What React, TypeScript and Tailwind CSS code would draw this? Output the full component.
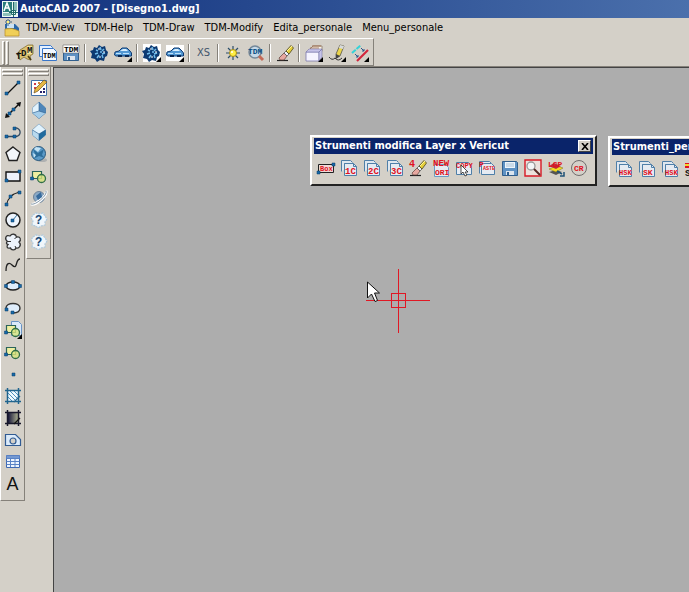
import type { ReactNode } from "react";
import { clsx } from "clsx";

type Tool = { label: string; icon: ReactNode };

const MENUS = ["TDM-View", "TDM-Help", "TDM-Draw", "TDM-Modify", "Edita_personale", "Menu_personale"];

function Svg({ children }: { children: ReactNode }) {
  return (
    <svg viewBox="0 0 18 18" className="size-[18px] shrink-0 overflow-visible" aria-hidden="true">
      {children}
    </svg>
  );
}

function Word({ x, y, size = 7, fill = "#e01020", children }: { x: number; y: number; size?: number; fill?: string; children: string }) {
  return (
    <text x={x} y={y} fontSize={size} fill={fill} fontWeight="bold" fontFamily="'Liberation Mono', monospace">
      {children}
    </text>
  );
}

const Node = ({ x, y }: { x: number; y: number }) => (
  <path d={`M${x} ${y}h3v3h-3z`} fill="#1769a8" stroke="#0b3c6b" strokeWidth=".5" />
);

const Flyout = () => <path d="M18 13v5h-5z" fill="#000" />;

function Pages({ text, x = 5, size = 9 }: { text: string; x?: number; size?: number }) {
  return (
    <Svg>
      <path d="M1.5 12.500V1.500h9l2 2M4.500 14V4.500h9" fill="#dfe7ef" stroke="#4f7fa8" />
      <path d="M4.500 4.500h9l3 3v9h-12z" fill="#e6ebf2" stroke="#4f7fa8" />
      <path d="M13.500 4.500v3h3" fill="none" stroke="#4f7fa8" />
      <Word x={x} y={15} size={size}>{text}</Word>
    </Svg>
  );
}

function Pencil() {
  return (
    <>
      <path d="M1 16.500h11" stroke="#222" strokeWidth="1.200" />
      <path d="M3 14l5-5 3 3-3 4H4z" fill="#e7a8a0" stroke="#5a3d38" strokeWidth=".7" />
      <path d="M8 9l2-2 3 3-2 2z" fill="#eef1f6" stroke="#444" strokeWidth=".7" />
      <path d="M10 7l5-5.500L17.500 4 13 10z" fill="#e5cf3a" stroke="#4a4420" strokeWidth=".8" />
      <path d="M11 7l5-5" stroke="#fff59a" />
    </>
  );
}

function Wheel({ lit }: { lit?: boolean }) {
  return (
    <Svg>
      {lit && <path d="M0 0h18v18H0z" fill="#fff" />}
      <path d="M3 3l3 1 2-3 3 2 3-1 1 4 2 2-1 4-2 1-1 4-4-1-3 2-2-3-4-1 1-4-2-3 3-1z" fill="#0d3a72" />
      <path d="M5 6l2 1M9 3l1 3M13 5l-2 2M4 10l3-1M14 9l-3 1M6 14l2-3M12 14l-1-3M9 8h2" stroke="#71bcec" strokeWidth="1.500" />
      <path d="M7 5h2M12 8h2M8 13h2" stroke="#fff" />
      {lit && <Flyout />}
    </Svg>
  );
}

function Car({ lit }: { lit?: boolean }) {
  return (
    <Svg>
      {lit && <path d="M0 1h18v16H0z" fill="#fff" />}
      <path d="M1 8l4-1 3-3h5l3 3 1.500 2v3H2L.5 11z" fill="#5298d4" stroke="#0d3a72" />
      <path d="M6 7l3-2h3l2 2z" fill="#d9efff" />
      <path d="M2 9.500h5M9 9.500h6" stroke="#bde2fb" />
      <path d="M4 11h4v2H4zM11 11h4v2h-4z" fill="#082650" />
      <Flyout />
    </Svg>
  );
}

function Disk({ tdm }: { tdm?: boolean }) {
  return (
    <Svg>
      <path d="M1.500 2.500h14l1 1v13h-15z" fill="#5f92c4" stroke="#315f8d" />
      <path d="M4 3h10v6H4z" fill="#eef5fb" />
      <path d="M5 5h8M5 7h8" stroke="#a6bfd6" />
      <path d="M5 12h8v4H5z" fill="#dce5ee" />
      <path d="M6 13h2v3H6z" fill="#2f5f90" />
      {tdm && (
        <>
          <path d="M1 1h16v8H1z" fill="#fff" stroke="#555" strokeWidth=".5" />
          <Word x={2} y={8} size={8} fill="#000">TDM</Word>
        </>
      )}
    </Svg>
  );
}

function Cube({ open }: { open?: boolean }) {
  return (
    <Svg>
      <path d="M9 1l6.500 6v5L9 17.500 2.500 12V7z" fill="#7fb0da" stroke="#3c6d98" strokeWidth=".8" />
      <path d={open ? "M9 1l6.500 6L9 11 2.500 7z" : "M9 1v9l-6.500 2V7z"} fill="#e2f3fd" />
      <path d={open ? "M9 11l6.500-4v5L9 17.500z" : "M9 10l6.500 2L9 17.500 2.500 12z"} fill={open ? "#1f6b9e" : "#a4cdea"} />
      <path d={open ? "M2.500 7L9 11v6.500L2.500 12z" : "M9 1l6.500 6v5L9 10z"} fill={open ? "#b8daef" : "#4e86b9"} />
      <path d={open ? "M2.500 7L9 11l6.500-4M9 11v6" : "M9 1v9l6.500 2M9 10l-6.500 2"} fill="none" stroke="#315f8d" strokeWidth=".6" />
    </Svg>
  );
}

function Block({ page }: { page?: boolean }) {
  return (
    <Svg>
      {page && <path d="M7.500.5h7l3 3v11h-10z" fill="#dceafa" stroke="#6b94c4" />}
      <path d="M2.500 4.500h9v7h-9z" fill="#efefa0" stroke="#2b6459" strokeWidth="1.200" />
      <circle cx="11.500" cy="11.500" r="4" fill="#d7e37c" fillOpacity=".8" stroke="#2f6d48" strokeWidth="1.300" />
      <Node x={0.5} y={10} />
      {page && <Flyout />}
    </Svg>
  );
}

function Help() {
  return (
    <Svg>
      <path d="M3 4l3-2 3 1 4-1 2 3 2 3-2 3v3l-4 1-3 2-2-2-4-1 1-4-2-3z" fill="#f0f6fb" stroke="#adc9dd" strokeWidth="1.200" strokeDasharray="2 1" />
      <Word x={5} y={13} size={12} fill="#174775">?</Word>
    </Svg>
  );
}

function Hatch({ dark }: { dark?: boolean }) {
  return (
    <Svg>
      <defs>
        <linearGradient id="hatch-fill">
          <stop stopColor="#17163a" />
          <stop offset="1" stopColor="#a8ac8d" />
        </linearGradient>
      </defs>
      <path d="M4 4h10v10H4z" fill={dark ? "url(#hatch-fill)" : "#eff9ff"} />
      {!dark && <path d="M4 10l4 4M4 6l8 8M6 4l8 8M10 4l4 4" stroke="#4d91bd" />}
      <path d="M1 3.500h16M1 14.500h16M3.500 1v16M14.500 1v16" stroke={dark ? "#17172b" : "#20648e"} strokeWidth="1.500" />
      <path d="M10 15l6-6" stroke={dark ? "#111" : "#28678e"} strokeWidth="1.200" />
    </Svg>
  );
}

const ICONS = {
  open: (
    <Svg>
      <path d="M4 6l8-5h5v9l-3 2 1 4-4-1-3-2-4 3-2-5z" fill="#d9c070" stroke="#7a6424" strokeWidth=".7" />
      <path d="M11 2h5v8h-5z" fill="#f3e39b" />
      <path d="M12 12l3 4M3 8l-2 3" stroke="#493b14" strokeWidth="1.500" />
      <Word x={0} y={15} size={9} fill="#111">T</Word>
      <Word x={5} y={12} size={9} fill="#111">D</Word>
      <Word x={11} y={9} size={9} fill="#111">M</Word>
    </Svg>
  ),
  tdmPages: (
    <Svg>
      <path d="M.5 12.500v-11h11l2 2v9z" fill="#e4f0ff" stroke="#3976c9" />
      <path d="M3.500 4.500h11l3 3v9h-14z" fill="#f3f8ff" stroke="#3976c9" />
      <Word x={4} y={14} size={7} fill="#000">TDM</Word>
    </Svg>
  ),
  sun: (
    <Svg>
      <path d="M9 2v14M2 9h14M4 4l10 10M14 4L4 14" stroke="#2b4e69" strokeWidth="1.200" />
      <circle cx="9" cy="9" r="3.500" fill="#ffef42" stroke="#a68b18" />
      <circle cx="8" cy="8" r="1" fill="#fff" />
    </Svg>
  ),
  tdmZoom: (
    <Svg>
      <circle cx="8" cy="8" r="6" fill="#c5d9e8" stroke="#748899" strokeWidth="1.500" />
      <path d="M12 12l4 4" stroke="#c46b57" strokeWidth="3" />
      <Word x={1} y={10} size={8} fill="#084d83">TDM</Word>
    </Svg>
  ),
  pencil: <Svg><Pencil /></Svg>,
  layers: (
    <Svg>
      <path d="M5 5l3-3h9v5l-3 4H4z" fill="#f8f3e9" stroke="#806b58" strokeWidth=".7" />
      <path d="M5 4h9M7 2h9M3 6h10" stroke="#9b5f40" strokeWidth=".8" />
      <path d="M1 8h13v9H1z" fill="#f5f4ff" stroke="#7b78ad" strokeWidth=".8" />
      <path d="M1 8l3-3h13l-3 3zM14 8l3-3v8l-3 4z" fill="#c6c3e8" stroke="#7b78ad" strokeWidth=".6" />
      <Flyout />
    </Svg>
  ),
  sketch: (
    <Svg>
      <path d="M1 13q3 4 6 1 3 4 7 0" fill="none" stroke="#333" />
      <path d="M8 10l4-9 4 1-4 10-4 2z" fill="#ead44b" stroke="#444" strokeWidth=".7" />
      <path d="M8 10l4 2-4 3z" fill="#444" />
      <path d="M12 1l4 1-1 3-4-1z" fill="#d7dadd" />
      <Flyout />
    </Svg>
  ),
  parallel: (
    <Svg>
      <path d="M1 9l9-8" stroke="#35d3d8" strokeWidth="2" strokeDasharray="5 1" />
      <path d="M6 17L17 6" stroke="#d3253c" strokeWidth="2.200" />
      <path d="M4 10l3 3M10 4l3 3M5 13h2v-2M11 7h2V5" fill="none" stroke="#28558a" />
      <Flyout />
    </Svg>
  ),
  line: <Svg><path d="M3 15L15 3" stroke="#111" strokeWidth="1.300" /><Node x={1} y={13} /><Node x={13} y={2} /></Svg>,
  xline: (
    <Svg>
      <path d="M3 15L15 3" stroke="#111" strokeWidth="1.400" />
      <path d="M1 17l1-5 4 4zM17 1l-5 1 4 4z" fill="#111" />
      <Node x={4} y={11} /><Node x={8} y={7} />
    </Svg>
  ),
  polyline: (
    <Svg>
      <path d="M2 13.500h9M10 5c8-1 8 9 1 8.500" fill="none" stroke="#334a60" strokeWidth="1.300" />
      <Node x={1} y={12} /><Node x={9} y={4} /><Node x={9} y={12} />
    </Svg>
  ),
  polygon: <Svg><path d="M9 2l7 5.500-3 8H5l-3-8z" fill="#f3f6fa" stroke="#222" strokeWidth="1.400" /></Svg>,
  rect: <Svg><path d="M2 5h14v9H2z" fill="#edf2fb" stroke="#111" strokeWidth="1.400" /><Node x={1} y={12} /><Node x={14} y={3} /></Svg>,
  arc: (
    <Svg>
      <path d="M2.500 16Q4 6 15.500 3" fill="none" stroke="#222" strokeWidth="1.200" />
      <Node x={1} y={14} /><Node x={5} y={6} /><Node x={14} y={2} />
    </Svg>
  ),
  circle: (
    <Svg>
      <circle cx="9" cy="9" r="7" fill="#edf4fd" stroke="#222" strokeWidth="1.500" />
      <path d="M9 9l4-5" stroke="#34709a" /><Node x={7} y={8} />
    </Svg>
  ),
  cloud: (
    <Svg>
      <path d="M3.500 8.500C0 6 2 1 6 3c2-3 6-2 6.500 1 4-1 5 3 2.500 5 3 3 0 7-3 6-1 3-5 2-5.500 0-4 1-4-2-2.500-3.500-2-.5-2-2-.5-3z" fill="#edf3fb" stroke="#333" strokeWidth="1.300" />
      <path d="M12.500 4l-2 2M4 8.500h3M12 15l-1-2" stroke="#333" />
    </Svg>
  ),
  spline: <Svg><path d="M2 16c0-8 3-9 6-6 6 6 3-6 8-6" fill="none" stroke="#222" strokeWidth="1.300" /></Svg>,
  ellipse: (
    <Svg>
      <ellipse cx="9" cy="9" rx="7" ry="4" fill="#dfedfb" stroke="#222" strokeWidth="1.400" />
      <Node x={0.5} y={7.5} /><Node x={7.5} y={3.5} /><Node x={14.5} y={7.5} />
    </Svg>
  ),
  ellipseArc: (
    <Svg>
      <path d="M2 9c0-6 14-6 14 0 0 4-4 5-7 5" fill="#dfedfb" stroke="#333" strokeWidth="1.400" />
      <Node x={1} y={9} /><Node x={7} y={12} />
    </Svg>
  ),
  point: <Svg><Node x={8} y={8} /></Svg>,
  region: (
    <Svg>
      <path d="M1.500 3.500h10l5 5v6h-15z" fill="#dbeafa" stroke="#315b93" strokeWidth="1.200" />
      <circle cx="9" cy="10" r="3" fill="#d4d0c8" stroke="#315b93" strokeWidth="1.200" />
    </Svg>
  ),
  table: (
    <Svg>
      <path d="M2.500 2.500h13v12h-13z" fill="#eef5ff" stroke="#3e69b3" />
      <path d="M2.500 2.500h13v3h-13z" fill="#7498d1" />
      <path d="M2.500 5.500h13M2.500 8.500h13M2.500 11.500h13M6.500 5v9M11 5v9" stroke="#5a83c6" />
    </Svg>
  ),
  text: <span className="font-['Liberation_Sans'] text-lg leading-none text-[#111]">A</span>,
  palette: (
    <Svg>
      <path d="M1.500 1.500h15v15h-15z" fill="#fff" stroke="#4171aa" />
      <path d="M4 4h2v2H4zM4 8h2v2H4z" fill="#d33b48" />
      <path d="M8 3h2v2H8z" fill="#d98837" />
      <path d="M10 12h2v2h-2zM13 12h2v2h-2zM13 9h2v2h-2z" fill="#24226c" />
      <path d="M4 14l1-4 9-9 3 2-9 9z" fill="#e5b743" stroke="#70501f" strokeWidth=".7" />
    </Svg>
  ),
  sphere: (
    <Svg>
      <ellipse cx="12" cy="15" rx="5" ry="2" fill="#89919a" opacity=".5" />
      <circle cx="8.500" cy="8.500" r="7" fill="#5b9ac8" stroke="#2a587c" />
      <path d="M3 4l5 4 6-4-2 6 3 3-6-2-6 3 2-5z" fill="#2d6e9b" />
      <path d="M6 2l5 1-3 4-4-3zM3 8l3 2-2 3z" fill="#c4e3f5" />
    </Svg>
  ),
  orbit: (
    <Svg>
      <circle cx="9" cy="8" r="5.500" fill="#8aa9c6" stroke="#6f8398" />
      <path d="M1 15C5 17 18 6 16 2" fill="none" stroke="#fff" strokeWidth="3" />
      <path d="M1 15C5 17 18 6 16 2" fill="none" stroke="#8599aa" />
      <path d="M6 7l5-4 1 5-4 3z" fill="#376b9d" />
    </Svg>
  ),
  box: (
    <Svg>
      <path d="M1.500 5.500h15v8h-15z" fill="#f1d8d5" stroke="#222" />
      <Word x={3} y={12}>Box</Word><Node x={0} y={12} /><Node x={15} y={4} />
    </Svg>
  ),
  four: <Svg><Pencil /><Word x={0} y={8} size={10}>4</Word></Svg>,
  newOri: (
    <Svg>
      <path d="M2.500 5.500h11l3 3v9h-14z" fill="#e6ebf2" stroke="#6b9ac4" />
      <Word x={1} y={7} size={9}>NEW</Word><Word x={3} y={16} size={8}>ORI</Word>
    </Svg>
  ),
  copy: (
    <Svg>
      <path d="M1.500 3.500h12l3 3v9h-15z" fill="#e6ebf2" stroke="#4f7fa8" />
      <Word x={1} y={9} size={7}>COPY</Word>
      <path d="M6 6v9l2-2 2 4 2-1-2-3h3z" fill="#fff" stroke="#222" strokeWidth=".8" />
    </Svg>
  ),
  paste: (
    <Svg>
      <path d="M1.500 14.500v-12h10l2 2" fill="#e6ebf2" stroke="#4f7fa8" />
      <path d="M3.500 4.500h10l3 3v8h-13z" fill="#e6ebf2" stroke="#4f7fa8" />
      <Word x={1} y={8} size={8}>P</Word><Word x={5} y={11} size={5}>ASTE</Word>
    </Svg>
  ),
  find: (
    <Svg>
      <path d="M1 1h16v16H1z" fill="#ece1dc" stroke="#d71924" strokeWidth="1.400" />
      <circle cx="7" cy="7" r="4" fill="#f4f6f7" stroke="#999" strokeWidth="1.300" />
      <path d="M10 10l6 6" stroke="#552a26" strokeWidth="2" />
    </Svg>
  ),
  lcp: (
    <Svg>
      <path d="M2 13l7 3 6-3-6-2z" fill="#555" />
      <path d="M2 10l7 3 7-4-6-2z" fill="#f3dc20" stroke="#806d16" strokeWidth=".5" />
      <path d="M2 7l7 3 5-3-7-3z" fill="#c22935" />
      <Word x={1} y={8} size={8}>LCP</Word>
      <path d="M10 12l5 3M13 17h4v-4" stroke="#1f5277" strokeWidth="1.500" fill="none" />
    </Svg>
  ),
  cr: (
    <Svg>
      <circle cx="9" cy="9" r="7.500" fill="none" stroke="#716d6d" />
      <Word x={4} y={12} size={8}>CR</Word>
    </Svg>
  ),
  sk: (
    <Svg>
      <path d="M1 3h16v5H1z" fill="#e01020" />
      <path d="M1 5h16" stroke="#f4d62b" strokeWidth="2" />
      <Word x={1} y={16} size={9} fill="#111">SK</Word>
    </Svg>
  ),
};

const TOP_GROUPS: Tool[][] = [
  [{ label: "Open TDM", icon: ICONS.open }, { label: "TDM sheets", icon: ICONS.tdmPages }, { label: "Save TDM", icon: <Disk tdm /> }],
  [{ label: "Wheel", icon: <Wheel /> }, { label: "Vehicle", icon: <Car /> }],
  [{ label: "Wheel views", icon: <Wheel lit /> }, { label: "Vehicle views", icon: <Car lit /> }],
  [{ label: "XS", icon: <span className="font-['DejaVu_Sans_Condensed'] text-[11px] text-[#42566c]">XS</span> }],
  [{ label: "Light", icon: ICONS.sun }, { label: "TDM zoom", icon: ICONS.tdmZoom }],
  [{ label: "Erase", icon: ICONS.pencil }],
  [{ label: "Layers", icon: ICONS.layers }, { label: "Sketch", icon: ICONS.sketch }, { label: "Parallel", icon: ICONS.parallel }],
];

const DRAW_TOOLS: Tool[] = [
  { label: "Line", icon: ICONS.line },
  { label: "Construction line", icon: ICONS.xline },
  { label: "Polyline", icon: ICONS.polyline },
  { label: "Polygon", icon: ICONS.polygon },
  { label: "Rectangle", icon: ICONS.rect },
  { label: "Arc", icon: ICONS.arc },
  { label: "Circle", icon: ICONS.circle },
  { label: "Revision cloud", icon: ICONS.cloud },
  { label: "Spline", icon: ICONS.spline },
  { label: "Ellipse", icon: ICONS.ellipse },
  { label: "Ellipse arc", icon: ICONS.ellipseArc },
  { label: "Insert block", icon: <Block page /> },
  { label: "Make block", icon: <Block /> },
  { label: "Point", icon: ICONS.point },
  { label: "Hatch", icon: <Hatch /> },
  { label: "Gradient", icon: <Hatch dark /> },
  { label: "Region", icon: ICONS.region },
  { label: "Table", icon: ICONS.table },
  { label: "Text", icon: ICONS.text },
];

const VIEW_TOOLS: Tool[] = [
  { label: "Palette", icon: ICONS.palette },
  { label: "Solid view", icon: <Cube /> },
  { label: "Top view", icon: <Cube open /> },
  { label: "Sphere", icon: ICONS.sphere },
  { label: "Block", icon: <Block /> },
  { label: "Orbit", icon: ICONS.orbit },
  { label: "Help", icon: <Help /> },
  { label: "Help topics", icon: <Help /> },
];

const LAYER_TOOLS: Tool[] = [
  { label: "Box", icon: ICONS.box },
  { label: "1C", icon: <Pages text="1C" /> },
  { label: "2C", icon: <Pages text="2C" /> },
  { label: "3C", icon: <Pages text="3C" /> },
  { label: "Erase 4", icon: ICONS.four },
  { label: "New origin", icon: ICONS.newOri },
  { label: "Copy", icon: ICONS.copy },
  { label: "Paste", icon: ICONS.paste },
  { label: "Save", icon: <Disk /> },
  { label: "Find", icon: ICONS.find },
  { label: "LCP", icon: ICONS.lcp },
  { label: "CR", icon: ICONS.cr },
];

const PERSONAL_TOOLS: Tool[] = [
  { label: "HSK", icon: <Pages text="HSK" x={4} size={7} /> },
  { label: "SK", icon: <Pages text="SK" size={8} /> },
  { label: "HSK copy", icon: <Pages text="HSK" x={4} size={7} /> },
  { label: "SK colours", icon: ICONS.sk },
];

function ToolButton({ tool }: { tool: Tool }) {
  return (
    <button type="button" aria-label={tool.label} className="flex h-[22px] w-[23px] shrink-0 items-center justify-center hover:bg-white/40">
      {tool.icon}
    </button>
  );
}

function Grip({ vertical }: { vertical?: boolean }) {
  const bar = clsx("border border-t-white border-r-[#85817a] border-b-[#85817a] border-l-white", vertical ? "h-6 w-[3px]" : "h-[3px] w-full");
  return (
    <div className={clsx("flex shrink-0 gap-px", vertical ? "flex-row" : "w-full flex-col px-px")}>
      <span className={bar} />
      <span className={bar} />
    </div>
  );
}

function SideBar({ label, tools }: { label: string; tools: Tool[] }) {
  return (
    <div role="toolbar" aria-label={label} className="flex w-[25px] flex-col items-center self-start border-r border-b border-l border-r-[#85817a] border-b-[#85817a] border-l-white pt-0.5 pb-1">
      <Grip />
      <div className="flex flex-col py-px">
        {tools.map((tool) => <ToolButton key={tool.label} tool={tool} />)}
      </div>
    </div>
  );
}

function FloatingBar({ title, tools, className }: { title: string; tools: Tool[]; className: string }) {
  return (
    <section aria-label={title} className={clsx("absolute border-2 border-t-white border-r-[#222] border-b-[#222] border-l-white bg-[#d4d0c8] p-0.5 pt-px", className)}>
      <div className="flex h-4 items-center justify-between bg-[#0a246a] pr-0.5 pl-px font-bold whitespace-nowrap text-white">
        <h2 className="text-[11px]">{title}</h2>
        <button type="button" aria-label="Close" className="flex h-3 w-[13px] items-center justify-center border border-t-white border-r-[#444] border-b-[#444] border-l-white bg-[#d4d0c8]">
          <svg viewBox="0 0 8 7" className="h-[7px] w-2" aria-hidden="true">
            <path d="M1 0l6 7M7 0L1 7" stroke="#000" strokeWidth="1.600" />
          </svg>
        </button>
      </div>
      <div className="flex py-[3px] pr-[3px]">
        {tools.map((tool) => <ToolButton key={tool.label} tool={tool} />)}
      </div>
    </section>
  );
}

function Crosshair() {
  return (
    <svg viewBox="0 0 64 64" className="absolute top-[201px] left-[312px] size-16" aria-hidden="true">
      <path d="M0 31.500h64M32.500 0v64" stroke="#e01824" />
      <rect x="25.500" y="24.500" width="14" height="14" fill="none" stroke="#e01824" />
    </svg>
  );
}

function Pointer() {
  return (
    <svg viewBox="0 0 13 22" className="absolute top-[213px] left-[313px] h-[22px] w-[13px]" aria-hidden="true">
      <path d="M.5 1v16l4-4 3.500 7.500 2.500-1L7.500 12h5z" fill="#fff" stroke="#111" />
    </svg>
  );
}

export default function App() {
  return (
    <div className="flex h-screen flex-col overflow-hidden bg-[#d4d0c8] font-['DejaVu_Sans_Condensed','DejaVu_Sans',sans-serif] text-[11px] text-black">
      <header className="flex h-[18px] shrink-0 items-center gap-0.5 bg-linear-to-r from-[#12307c] to-[#4b70ac] pl-0.5 text-white">
        <svg viewBox="0 0 16 16" className="size-4 shrink-0" aria-hidden="true">
          <path d="M0 0h16v16H0z" fill="#edf8f4" />
          <path d="M1 1h9v10H1z" fill="#2a7d7b" />
          <path d="M11 1h4v9h-4zM1 12h8v3H1z" fill="#8cc0ba" />
          <path d="M2 10l3-8 3 8M3 7h4" stroke="#fff" strokeWidth="1.500" fill="none" />
          <path d="M11.500 1v15M7 11.500h9M9.500 9.500h4v4h-4z" stroke="#226b69" fill="none" />
        </svg>
        <h1 className="text-[11px] font-bold whitespace-nowrap">AutoCAD 2007 - [Disegno1.dwg]</h1>
      </header>

      <nav aria-label="Main menu" className="flex h-5 shrink-0 items-center gap-1.5 pl-1">
        <svg viewBox="0 0 16 18" className="h-[18px] w-4 shrink-0" aria-hidden="true">
          <path d="M1 5h10l4 4v6H1z" fill="#2b67a8" />
          <path d="M3 5h7v4H3z" fill="#cce3f5" />
          <path d="M1 10q7-2 14 2v5H1z" fill="#f0cf58" stroke="#b58a25" strokeWidth=".7" />
          <path d="M4 0v7M1 3h7M2 1l4 4M6 1L2 5" stroke="#17476e" strokeWidth=".8" />
          <path d="M3 2h2v2H3z" fill="#fff27a" />
        </svg>
        <div className="flex gap-2.5">
          {MENUS.map((menu) => (
            <button key={menu} type="button" className="whitespace-nowrap">{menu}</button>
          ))}
        </div>
      </nav>

      <div className="flex h-7 shrink-0">
        <div role="toolbar" aria-label="TDM" className="flex items-center border-t border-r border-b border-t-white border-r-[#85817a] border-b-[#85817a] px-0.5 pt-0.5">
          <div className="w-[11px]"><Grip vertical /></div>
          {TOP_GROUPS.map((group, i) => (
            <div key={group[0].label} className="flex items-center">
              {i > 0 && <span className="mx-0.5 h-[18px] w-0.5 border-r border-l border-r-white border-l-[#85817a]" />}
              {group.map((tool) => <ToolButton key={tool.label} tool={tool} />)}
            </div>
          ))}
        </div>
      </div>

      <div className="flex min-h-0 flex-1 border-t border-[#85817a]">
        <div className="flex w-[53px] shrink-0 gap-px">
          <SideBar label="Draw" tools={DRAW_TOOLS} />
          <SideBar label="View" tools={VIEW_TOOLS} />
        </div>
        <main className="relative min-w-0 flex-1 overflow-hidden border-t border-l border-[#444] bg-[#adadad]">
          <FloatingBar title="Strumenti modifica Layer x Vericut" tools={LAYER_TOOLS} className="top-[67px] left-[256px]" />
          <FloatingBar title="Strumenti_personale" tools={PERSONAL_TOOLS} className="top-[68px] left-[554px] w-[180px]" />
          <Crosshair />
          <Pointer />
        </main>
      </div>
    </div>
  );
}
